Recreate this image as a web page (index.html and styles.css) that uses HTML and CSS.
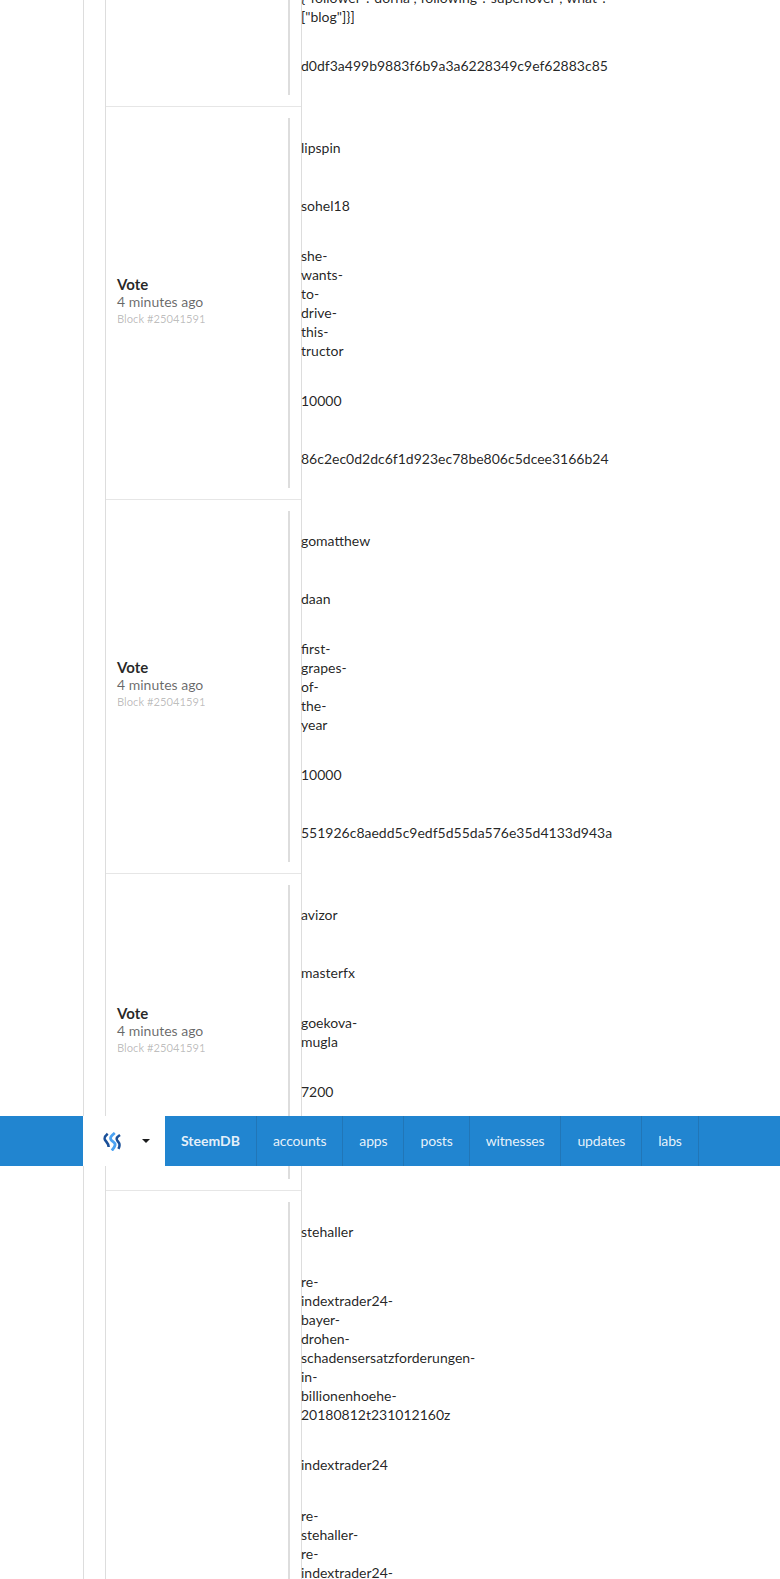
FILE: index.html
```html
<!DOCTYPE html>
<html lang="en">
<head>
<meta charset="utf-8">
<title>SteemDB</title>
<link rel="stylesheet" href="styles.css">
</head>
<body>
<main class="shell">
  <div class="feed">
    <section class="row">
      <div class="label"></div>
      <div class="values">
        <div class="val multi json">{"follower":"dorha","following":"superlover","what":<br>["blog"]}]</div>
        <div class="val">d0df3a499b9883f6b9a3a6228349c9ef62883c85</div>
      </div>
    </section>
    <section class="row">
      <div class="label"><strong>Vote</strong><span class="ago">4 minutes ago</span><small>Block #25041591</small></div>
      <div class="values">
        <div class="val who">lipspin</div>
        <div class="val who">sohel18</div>
        <div class="val multi slug">she-wants-to-drive-this-tructor</div>
        <div class="val">10000</div>
        <div class="val">86c2ec0d2dc6f1d923ec78be806c5dcee3166b24</div>
      </div>
    </section>
    <section class="row">
      <div class="label"><strong>Vote</strong><span class="ago">4 minutes ago</span><small>Block #25041591</small></div>
      <div class="values">
        <div class="val who">gomatthew</div>
        <div class="val who">daan</div>
        <div class="val multi slug">first-grapes-of-the-year</div>
        <div class="val">10000</div>
        <div class="val">551926c8aedd5c9edf5d55da576e35d4133d943a</div>
      </div>
    </section>
    <section class="row">
      <div class="label"><strong>Vote</strong><span class="ago">4 minutes ago</span><small>Block #25041591</small></div>
      <div class="values">
        <div class="val who">avizor</div>
        <div class="val who">masterfx</div>
        <div class="val multi slug">goekova-mugla</div>
        <div class="val">7200</div>
        <div class="val"></div>
      </div>
    </section>
    <section class="row">
      <div class="label"></div>
      <div class="values">
        <div class="val who">stehaller</div>
        <div class="val multi slug">re-indextrader24-bayer-drohen-schadensersatzforderungen-in-billionenhoehe-20180812t231012160z</div>
        <div class="val">indextrader24</div>
        <div class="val multi slug">re-stehaller-re-indextrader24-bayer-drohen-schadensersatzforderungen-in-billionenhoehe-20180812t231012160z</div>
      </div>
    </section>
  </div>
</main>
<nav class="menu">
  <div class="brand">
    <svg class="logo" width="20" height="19" viewBox="0 0 20 19" aria-hidden="true">
      <path class="dark" d="M4.7 1.8 C1.6 4.4 .6 6 2.4 8.6 C3.8 10.6 5.8 12 5.6 15"/>
      <path class="dark" d="M17 3 C14 5 12.6 6.4 14.4 8.8 C15.8 10.6 18 12.2 15.4 16.8"/>
      <path class="light" d="M11.8 1 C8.6 3.6 6.4 5.4 8.2 8 C9.6 10 12.8 10.6 12 13.4 C11.6 15 10.2 17 8.8 18.5"/>
    </svg>
    <span class="caret"></span>
  </div>
  <a class="item bold">SteemDB</a>
  <a class="item">accounts</a>
  <a class="item">apps</a>
  <a class="item">posts</a>
  <a class="item">witnesses</a>
  <a class="item">updates</a>
  <a class="item">labs</a>
</nav>
</body>
</html>
```
FILE: styles.css
```css
* { box-sizing: border-box; }
html, body {
  margin: 0;
  height: 1579px;
  overflow: hidden;
  background: #fff;
}
body {
  position: relative;
  font-family: Lato, "Open Sans", sans-serif;
  font-size: 14px;
  line-height: 19px;
  color: rgba(0, 0, 0, 0.87);
}
.shell {
  margin-left: 83px;
  margin-top: -37px;
  height: 1616px;
  border-left: 1px solid #ddd;
  padding-left: 21px;
}
.feed {
  width: 197px;
  height: 100%;
  border-left: 1px solid #ddd;
  border-right: 1px solid #ddd;
}
.row {
  display: flex;
  padding: 11px 0;
  border-top: 1px solid #e6e6e6;
}
.label {
  flex: none;
  width: 184px;
  margin-right: 11px;
  padding: 0 0 4px 11px;
  border-right: 2px solid #ddd;
  display: flex;
  flex-direction: column;
  justify-content: center;
}
.label strong {
  font-size: 15px;
  line-height: 17px;
  font-weight: 700;
  color: rgba(0, 0, 0, 0.85);
}
.ago {
  line-height: 17px;
  color: rgba(0, 0, 0, 0.6);
}
.label small {
  font-size: 11.2px;
  line-height: 17px;
  color: rgba(0, 0, 0, 0.27);
}
.values {
  flex: none;
  white-space: nowrap;
}
.val {
  height: 58px;
  padding: 19px 0 20px;
}
.val.who {
  padding: 20px 0 19px;
}
.val.multi {
  height: auto;
  padding: 12px 0;
}
.val.json {
  padding: 13px 0 11px;
}
.val.slug {
  white-space: normal;
  width: 1px;
}
.menu {
  position: absolute;
  left: 0;
  top: 1116px;
  width: 780px;
  height: 50px;
  display: flex;
  padding-left: 83px;
  background: #2185d0;
}
.brand {
  flex: none;
  width: 82px;
  background: #fff;
  display: flex;
  align-items: center;
  padding-left: 20px;
}
.logo {
  flex: none;
  fill: none;
}
.logo .dark { stroke: #1a5099; stroke-width: 2.6; }
.logo .light { stroke: #4ba2f2; stroke-width: 2.8; }
.caret {
  margin-left: 19px;
  margin-top: -1px;
  width: 0;
  height: 0;
  border-style: solid;
  border-width: 4px 4px 0;
  border-color: #1b1c1d transparent transparent;
}
.item {
  display: flex;
  align-items: center;
  padding: 0 16px 2px;
  border-right: 1px solid rgba(34, 36, 38, 0.15);
  color: rgba(255, 255, 255, 0.9);
  letter-spacing: -0.15px;
}
.item.bold { font-weight: 700; letter-spacing: 0; }
```
